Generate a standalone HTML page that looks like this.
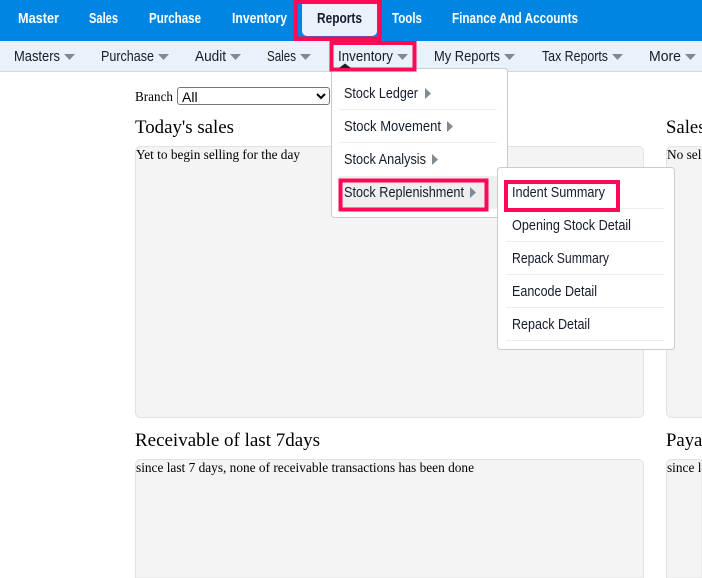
<!DOCTYPE html>
<html lang="en">
<head>
<meta charset="utf-8">
<title>Inventory Reports</title>
<style>
html,body{margin:0;padding:0;width:702px;height:578px;overflow:hidden;background:#fff}
select{position:absolute;left:177px;top:87px;width:153px;height:18px;box-sizing:border-box;font:14px "Liberation Sans",sans-serif;padding:0;border:1px solid #767676;border-radius:3px;background:#fff;color:#000}
svg{position:absolute;left:0;top:0;display:block}
.t{font-family:"Liberation Sans",sans-serif;font-size:14.500px;fill:#141c2c}
.w{font-family:"Liberation Sans",sans-serif;font-size:15px;font-weight:bold;fill:#fff}
.s{font-family:"Liberation Serif",serif;fill:#000}
</style>
</head>
<body>
<select><option>All</option></select>
<svg width="702" height="578" viewBox="0 0 702 578" xmlns="http://www.w3.org/2000/svg" style="pointer-events:none">
  <!-- bars -->
  <rect x="0" y="0" width="702" height="41" fill="#0085e3"/>
  <rect x="0" y="41" width="702" height="30" fill="#e9f2fa"/>
  <rect x="0" y="71" width="702" height="1" fill="#cfd8de"/>

  <!-- top nav -->
  <text class="w" x="18" y="23" textLength="41" lengthAdjust="spacingAndGlyphs">Master</text>
  <text class="w" x="89" y="23" textLength="29" lengthAdjust="spacingAndGlyphs">Sales</text>
  <text class="w" x="149" y="23" textLength="52" lengthAdjust="spacingAndGlyphs">Purchase</text>
  <text class="w" x="232" y="23" textLength="55" lengthAdjust="spacingAndGlyphs">Inventory</text>
  <path d="M302 4H377V31a5 5 0 0 1-5 5H307a5 5 0 0 1-5-5Z" fill="#e9f2fa"/>
  <path d="M293.500 0H382V41H293.500ZM297.500 4V36.500H377.500V4Z" fill="#fb0a55" fill-rule="evenodd"/>
  <text class="w" x="317" y="23" textLength="45" lengthAdjust="spacingAndGlyphs" style="fill:#141c2c">Reports</text>
  <text class="w" x="392" y="23" textLength="30" lengthAdjust="spacingAndGlyphs">Tools</text>
  <text class="w" x="452" y="23" textLength="126" lengthAdjust="spacingAndGlyphs">Finance And Accounts</text>

  <!-- sub nav -->
  <text class="t" x="14" y="61" textLength="46" lengthAdjust="spacingAndGlyphs">Masters</text>
  <path d="M64 54H75L69.500 60Z" fill="#808a92"/>
  <text class="t" x="101" y="61" textLength="53" lengthAdjust="spacingAndGlyphs">Purchase</text>
  <path d="M158 54H169L163.500 60Z" fill="#808a92"/>
  <text class="t" x="195" y="61" textLength="31" lengthAdjust="spacingAndGlyphs">Audit</text>
  <path d="M230 54H241L235.500 60Z" fill="#808a92"/>
  <text class="t" x="267" y="61" textLength="29" lengthAdjust="spacingAndGlyphs">Sales</text>
  <path d="M300 54H311L305.500 60Z" fill="#808a92"/>
  <text class="t" x="338" y="61" textLength="55" lengthAdjust="spacingAndGlyphs">Inventory</text>
  <path d="M397 54H408L402.500 60Z" fill="#808a92"/>
  <text class="t" x="434" y="61" textLength="66" lengthAdjust="spacingAndGlyphs">My Reports</text>
  <path d="M504 54H515L509.500 60Z" fill="#808a92"/>
  <text class="t" x="542" y="61" textLength="66" lengthAdjust="spacingAndGlyphs">Tax Reports</text>
  <path d="M612 54H623L617.500 60Z" fill="#808a92"/>
  <text class="t" x="649" y="61" textLength="32" lengthAdjust="spacingAndGlyphs">More</text>
  <path d="M685 54H696L690.500 60Z" fill="#808a92"/>

  <!-- page content -->
  <text class="s" x="135" y="101" font-size="13.330" textLength="38" lengthAdjust="spacingAndGlyphs">Branch</text>
  <text class="s" x="135" y="133" font-size="18.720" textLength="99" lengthAdjust="spacingAndGlyphs">Today's sales</text>
  <text class="s" x="666" y="133" font-size="18.720">Sales of last 7days</text>
  <rect x="135.500" y="146.500" width="508" height="271" rx="5" fill="#f4f4f4" stroke="#e3e3e3"/>
  <rect x="666.500" y="146.500" width="100" height="271" rx="5" fill="#f4f4f4" stroke="#e3e3e3"/>
  <text class="s" x="136" y="159" font-size="13.330" textLength="164" lengthAdjust="spacingAndGlyphs">Yet to begin selling for the day</text>
  <text class="s" x="667" y="159" font-size="13.330">No selling for the day</text>

  <text class="s" x="135" y="446" font-size="18.720" textLength="185" lengthAdjust="spacingAndGlyphs">Receivable of last 7days</text>
  <text class="s" x="666" y="446" font-size="18.720">Payable of last 7days</text>
  <path d="M135.500 578V464.500a5 5 0 0 1 5-5H638.500a5 5 0 0 1 5 5V578Z" fill="#f4f4f4" stroke="#e3e3e3"/>
  <path d="M666.500 578V464.500a5 5 0 0 1 5-5H702V578Z" fill="#f4f4f4" stroke="#e3e3e3"/>
  <text class="s" x="136" y="472" font-size="13.330" textLength="338" lengthAdjust="spacingAndGlyphs">since last 7 days, none of receivable transactions has been done</text>
  <text class="s" x="667" y="472" font-size="13.330">since last 7 days</text>

  <!-- inventory dropdown -->
  <rect x="331.500" y="68.500" width="176" height="149" rx="3" fill="#fff" stroke="#ccc"/>
  <path d="M339 109.500H497M339 142.500H497" stroke="#eee"/>
  <rect x="339" y="176" width="158" height="33" rx="2" fill="#eee"/>
  <text class="t" x="344" y="98" textLength="74" lengthAdjust="spacingAndGlyphs">Stock Ledger</text>
  <path d="M425 88L431 93.500L425 99Z" fill="#808a92"/>
  <text class="t" x="344" y="131" textLength="97" lengthAdjust="spacingAndGlyphs">Stock Movement</text>
  <path d="M447 121L453 126.500L447 132Z" fill="#808a92"/>
  <text class="t" x="344" y="164" textLength="82" lengthAdjust="spacingAndGlyphs">Stock Analysis</text>
  <path d="M432 154L438 159.500L432 165Z" fill="#808a92"/>
  <text class="t" x="344" y="197" textLength="120" lengthAdjust="spacingAndGlyphs">Stock Replenishment</text>
  <path d="M470 187L476 192.500L470 198Z" fill="#808a92"/>
  <rect x="340.500" y="180.500" width="146" height="29" fill="none" stroke="#fb0a55" stroke-width="4"/>

  <!-- inventory highlight -->
  <rect x="331.500" y="43" width="83" height="26.500" fill="none" stroke="#fb0a55" stroke-width="4"/>
  <path d="M339 68L345 63.500L351 68Z" fill="#222"/>

  <!-- replenishment dropdown -->
  <rect x="497.500" y="167.500" width="177" height="182" rx="3" fill="#fff" stroke="#ccc"/>
  <path d="M506 208.500H664M506 241.500H664M506 274.500H664M506 307.500H664M506 340.500H664" stroke="#eee"/>
  <rect x="506" y="182" width="112" height="28" fill="none" stroke="#fb0a55" stroke-width="4"/>
  <text class="t" x="512" y="197" textLength="93" lengthAdjust="spacingAndGlyphs">Indent Summary</text>
  <text class="t" x="512" y="230" textLength="119" lengthAdjust="spacingAndGlyphs">Opening Stock Detail</text>
  <text class="t" x="512" y="263" textLength="97" lengthAdjust="spacingAndGlyphs">Repack Summary</text>
  <text class="t" x="512" y="296" textLength="85" lengthAdjust="spacingAndGlyphs">Eancode Detail</text>
  <text class="t" x="512" y="329" textLength="78" lengthAdjust="spacingAndGlyphs">Repack Detail</text>
</svg>
</body>
</html>
